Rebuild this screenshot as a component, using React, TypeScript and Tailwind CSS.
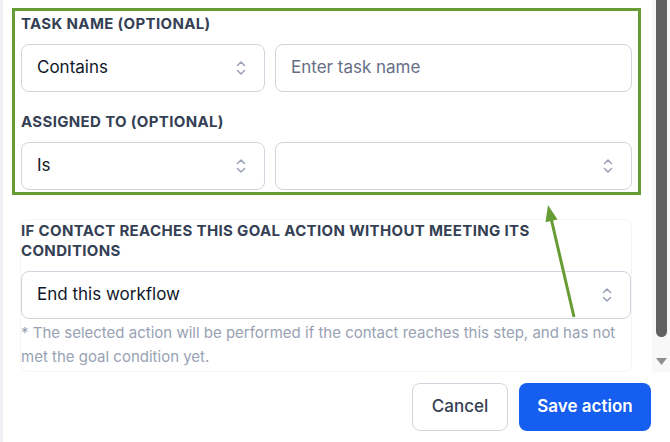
import React from 'react';

const Chevrons: React.FC = () => (
  <svg width="10" height="16" viewBox="0 0 10 16" fill="none" className="shrink-0">
    <path d="M1.5 5.5 L5 2 L8.5 5.5" stroke="#98a2b3" strokeWidth="1.5" strokeLinecap="round" strokeLinejoin="round" />
    <path d="M1.5 10.5 L5 14 L8.5 10.5" stroke="#98a2b3" strokeWidth="1.5" strokeLinecap="round" strokeLinejoin="round" />
  </svg>
);

const SelectBox: React.FC<{ value?: string; className?: string }> = ({ value, className = '' }) => (
  <div
    className={`h-[48px] rounded-[8px] border border-[#d0d5dd] bg-white flex items-center justify-between pl-[15px] pr-[18px] ${className}`}
  >
    <span className="text-[17px] text-[#101828]">{value}</span>
    <Chevrons />
  </div>
);

const Label: React.FC<{ children: React.ReactNode; className?: string }> = ({ children, className = '' }) => (
  <div className={`text-[15px] leading-5 font-bold uppercase tracking-[0.35px] text-[#344054] ${className}`}>
    {children}
  </div>
);

const App: React.FC = () => {
  return (
    <div className="relative w-[670px] h-[442px] bg-white overflow-hidden font-['Inter',sans-serif]">
      <div className="flex h-full">
        {/* left edge strip */}
        <div className="w-[3px] bg-[#eef0f4]" />

        <div className="flex-1 flex flex-col">
          {/* scroll area */}
          <div className="h-[372px] flex">
            <div className="flex-1 pl-[9px] pr-[11px] pt-[8px]">
              {/* highlighted filters */}
              <div className="border-[3px] border-[#679c35] px-[6px] pt-[3px] pb-[2px]">
                <Label>Task name (optional)</Label>
                <div className="flex gap-[10px] mt-[10px]">
                  <SelectBox value="Contains" className="w-[244px]" />
                  <div className="flex-1 h-[48px] rounded-[8px] border border-[#d0d5dd] bg-white flex items-center px-[15px]">
                    <span className="text-[17px] text-[#667085]">Enter task name</span>
                  </div>
                </div>

                <Label className="mt-[20px]">Assigned to (optional)</Label>
                <div className="flex gap-[10px] mt-[10px]">
                  <SelectBox value="Is" className="w-[244px]" />
                  <SelectBox className="flex-1" />
                </div>
              </div>

              {/* goal fallback */}
              <div className="mt-[24px] ml-[8px] mr-[9px] border border-[#f4f5f7] rounded-[8px] pt-[1px] pb-[2px]">
                <Label>
                  If contact reaches this goal action without meeting its
                  <br />
                  conditions
                </Label>
                <SelectBox value="End this workflow" className="mt-[10px]" />
                <p className="mt-[2px] text-[15px] leading-6 text-[#98a2b3]">
                  * The selected action will be performed if the contact reaches this step, and has not
                  <br />
                  met the goal condition yet.
                </p>
              </div>
            </div>

            {/* scrollbar */}
            <div className="w-[18px] bg-[#f8f8f8] flex flex-col items-start pl-[4px]">
              <div className="w-[11px] h-[337px] bg-[#616161] rounded-b-[6px]" />
              <svg width="11" height="8" viewBox="0 0 11 8" className="mt-[21px]">
                <polygon points="0,0 11,0 5.5,7" fill="#8f8f8f" />
              </svg>
            </div>
          </div>

          {/* footer */}
          <div className="flex justify-end gap-[11px] pt-[11px] pr-[19px]">
            <button className="h-[48px] w-[96px] rounded-[8px] border border-[#d0d5dd] bg-white text-[17px] font-medium text-[#344054]">
              Cancel
            </button>
            <button className="h-[48px] w-[132px] rounded-[8px] bg-[#155eef] text-[17px] font-semibold text-white">
              Save action
            </button>
          </div>
        </div>
      </div>

      {/* annotation arrow */}
      <svg className="absolute inset-0 pointer-events-none" width="670" height="442" viewBox="0 0 670 442">
        <line x1="574" y1="317" x2="551" y2="218" stroke="#679c35" strokeWidth="3" />
        <polygon points="548,205 557.5,219.5 545.5,222.2" fill="#679c35" />
      </svg>
    </div>
  );
};

export default App;
